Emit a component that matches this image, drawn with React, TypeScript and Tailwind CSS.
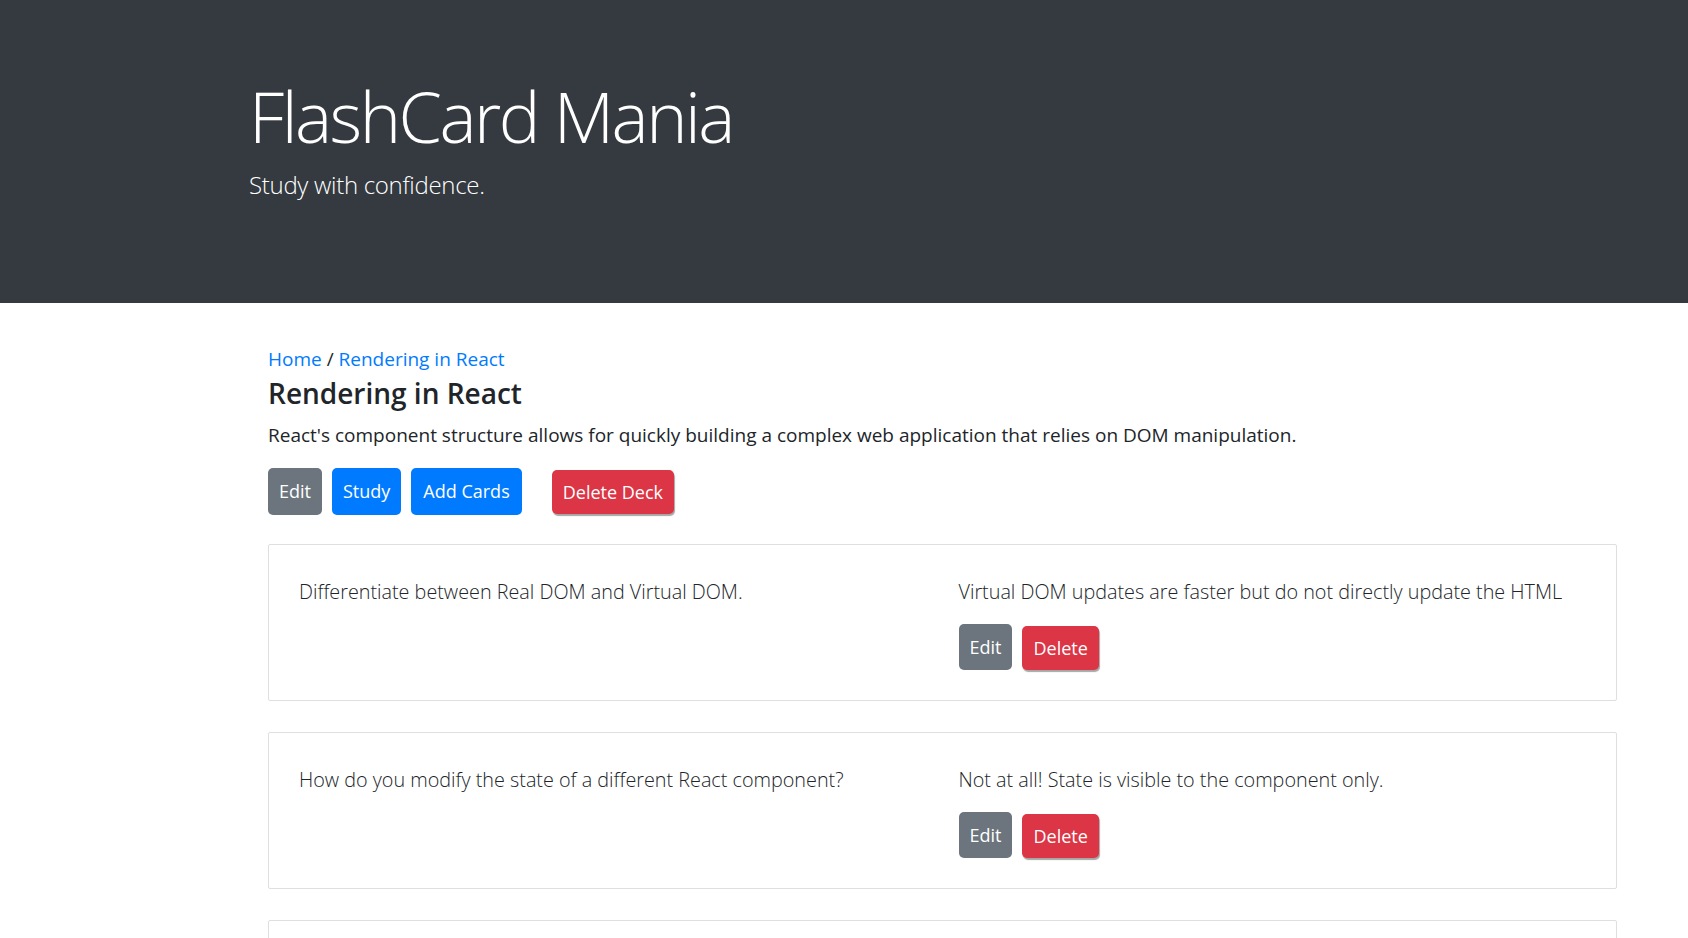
const deck = {
  name: "Rendering in React",
  description:
    "React's component structure allows for quickly building a complex web application that relies on DOM manipulation.",
  cards: [
    {
      id: 1,
      front: "Differentiate between Real DOM and Virtual DOM.",
      back: "Virtual DOM updates are faster but do not directly update the HTML",
    },
    {
      id: 2,
      front: "How do you modify the state of a different React component?",
      back: "Not at all! State is visible to the component only.",
    },
    {
      id: 3,
      front: "How do you pass data from a parent to a child component?",
      back: "Through props.",
    },
  ],
};

const font = { fontFamily: '"Open Sans", "Noto Sans", Arial, sans-serif' };

const Header = () => (
  <div className="bg-[#343a40] h-[303px] pl-[249px] pt-[73px] text-white">
    <h1 className="text-[70px] leading-[86px] font-light tracking-[-2.5px]">FlashCard Mania</h1>
    <p className="mt-[7px] text-[24px] leading-[37px] font-light tracking-[-0.3px]">Study with confidence.</p>
  </div>
);

const CardItem = ({ front, back }: { front: string; back: string }) => (
  <div className="border border-[#dfdfdf] rounded-[2px] px-[30px] pt-[32px] pb-[30px] grid grid-cols-2 gap-x-[32px] text-[19.8px] leading-[30px] text-[#212529] font-light">
    <p>{front}</p>
    <div>
      <p>{back}</p>
      <div className="flex items-start gap-[10px] mt-[17px]">
        <button className="h-[46px] px-[11px] rounded-[5px] bg-[#6c757d] text-white text-[18px] font-normal">Edit</button>
        <button className="h-[44px] mt-[2px] px-[11px] rounded-[5px] bg-[#dc3545] text-white text-[18px] font-normal shadow-[1px_2px_1px_rgba(0,0,0,0.35)]">
          Delete
        </button>
      </div>
    </div>
  </div>
);

export default function App() {
  return (
    <div className="min-h-screen bg-white" style={font}>
      <Header />
      <main className="pl-[268px] pr-[71px] pt-[41px] pb-10">
        <nav className="text-[19px] leading-[30px] text-[#212529]">
          <a href="#" className="text-[#007bff]">Home</a> /{" "}
          <a href="#" className="text-[#007bff]">{deck.name}</a>
        </nav>
        <h2 className="mt-[2px] text-[28px] leading-[34px] font-semibold text-[#212529]">{deck.name}</h2>
        <p className="mt-[10px] text-[19px] leading-[30px] text-[#212529]">{deck.description}</p>
        <div className="flex items-start gap-[10px] mt-[18px] text-[18px]">
          <button className="h-[47px] px-[11px] rounded-[5px] bg-[#6c757d] text-white">Edit</button>
          <button className="h-[47px] px-[11px] rounded-[5px] bg-[#007bff] text-white">Study</button>
          <button className="h-[47px] px-[12px] rounded-[5px] bg-[#007bff] text-white">Add Cards</button>
          <button className="ml-[20px] mt-[2px] h-[44px] px-[11px] rounded-[5px] bg-[#dc3545] text-white shadow-[1px_2px_1px_rgba(0,0,0,0.35)]">
            Delete Deck
          </button>
        </div>
        <div className="mt-[29px] flex flex-col gap-[31px]">
          {deck.cards.map((card) => (
            <CardItem key={card.id} front={card.front} back={card.back} />
          ))}
        </div>
      </main>
    </div>
  );
}
